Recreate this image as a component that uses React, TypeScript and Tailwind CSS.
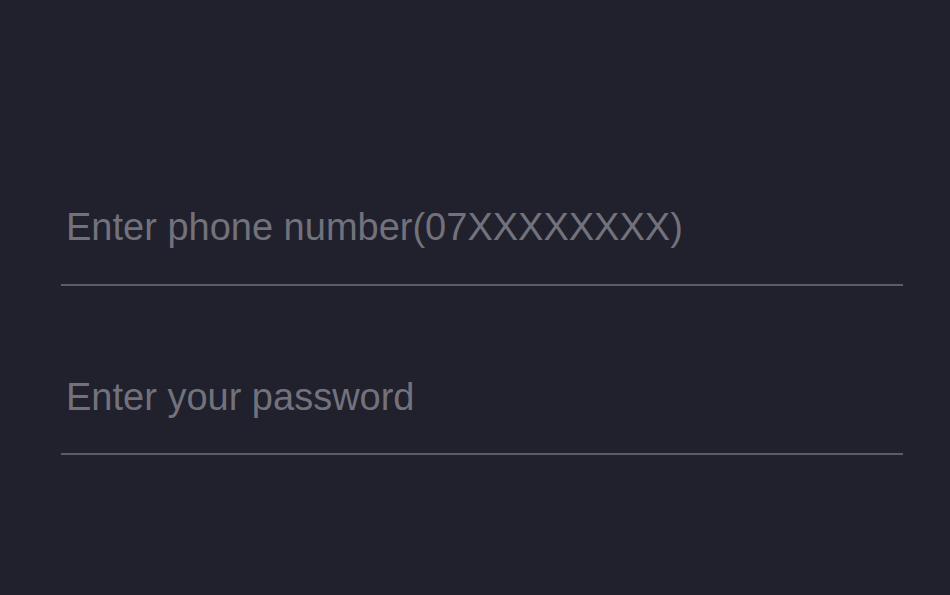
import React, { useState } from 'react';

const App: React.FC = () => {
  const [phone, setPhone] = useState('');
  const [password, setPassword] = useState('');

  return (
    <div className="min-h-screen w-full bg-[#21202d] px-[61px] pt-[205px] font-['Liberation_Sans',Arial,sans-serif]">
      <div className="flex w-[842px] flex-col gap-[89px]">
        <input
          type="tel"
          value={phone}
          onChange={(e) => setPhone(e.target.value)}
          placeholder="Enter phone number(07XXXXXXXX)"
          className="w-full border-b-2 border-[#5c5b68] bg-transparent pb-[35px] pl-[5px] text-[38px] leading-[44px] text-[#d4d4d8] outline-none placeholder:text-[#72727c]"
        />
        <input
          type="password"
          value={password}
          onChange={(e) => setPassword(e.target.value)}
          placeholder="Enter your password"
          className="w-full border-b-2 border-[#5c5b68] bg-transparent pb-[34px] pl-[5px] text-[38px] leading-[44px] text-[#d4d4d8] outline-none placeholder:text-[#72727c]"
        />
      </div>
    </div>
  );
};

export default App;
